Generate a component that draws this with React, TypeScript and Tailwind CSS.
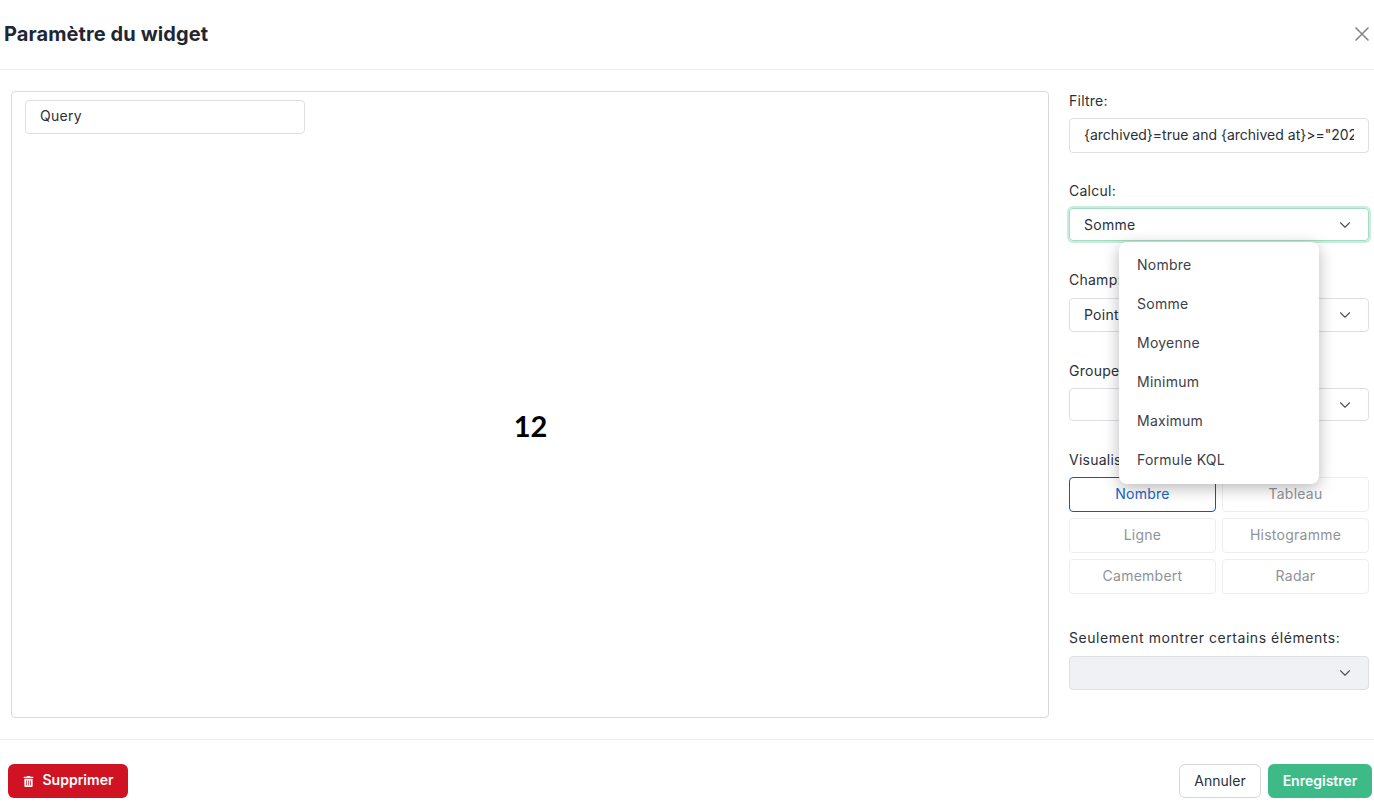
import React from "react";
import { ChevronDown } from "lucide-react";
import { FaTrashAlt } from "react-icons/fa";

const options = ["Nombre", "Somme", "Moyenne", "Minimum", "Maximum", "Formule KQL"];
const charts = ["Tableau", "Ligne", "Histogramme", "Camembert", "Radar"];

const Select = ({ value, className = "" }: { value?: string; className?: string }) => (
  <div
    className={`flex items-center justify-between rounded border pl-[14px] pr-[14px] ${className}`}
  >
    <span className="pb-[1px]">{value}</span>
    <ChevronDown size={18} strokeWidth={1.5} className="text-[#4f5259]" />
  </div>
);

const App: React.FC = () => {
  return (
    <div className="flex h-[803px] w-[1374px] flex-col overflow-hidden bg-white font-['Inter',sans-serif] text-[14px] tracking-[0.25px] text-[#2b2f38]">
      {/* Header */}
      <div className="flex h-[70px] shrink-0 items-center justify-between border-b border-[#eeeef0] pr-[4px] pl-[4px] pb-[3px]">
        <h1 className="pt-[1px] text-[20px] font-bold tracking-[0.1px] text-[#1f2733]">Paramètre du widget</h1>
        <svg className="mt-[2px]" width="16" height="16" viewBox="0 0 16 16" fill="none" stroke="#84868a" strokeWidth="1.6">
          <path d="M1.5 1.5 14.5 14.5M14.5 1.5 1.5 14.5" />
        </svg>
      </div>

      {/* Body */}
      <div className="flex flex-1 gap-5 pt-[21px] pr-[5px] pl-[11px]">
        <div className="flex h-[627px] w-[1038px] flex-col rounded-sm border border-[#d9d9de] pt-2 pl-[13px]">
          <div className="flex h-[34px] w-[280px] items-center rounded border border-[#dfdfe5] pb-[2px] pl-[14px]">
            Query
          </div>
          <div className="flex h-[585px] w-[1011px] items-center justify-center">
            <span className="font-['Lato',sans-serif] text-[29px] font-bold tracking-normal text-black">12</span>
          </div>
        </div>

        <div className="relative w-[300px]">
          <div className="flex h-[20px] items-center pb-[2px]">Filtre:</div>
          <div className="mt-[7px] flex h-[35px] items-center rounded border border-[#dfdfe5] px-[14px] pb-[2px] tracking-normal">
            <div className="overflow-hidden whitespace-nowrap">{'{archived}=true and {archived at}>="2024-01-01"'}</div>
          </div>

          <div className="mt-[28px] flex h-[20px] items-center pb-[2px]">Calcul:</div>
          <Select
            value="Somme"
            className="mt-[7px] h-[33px] border-[#a3dcc3] shadow-[0_0_0_2px_#c9eddd]"
          />

          <div className="mt-[29px] flex h-[21px] items-center pb-[2px]">Champ:</div>
          <Select value="Points" className="mt-[7px] h-[34px] border-[#dfdfe5]" />

          <div className="mt-[28px] flex h-[21px] items-center">Grouper par:</div>
          <Select className="mt-[7px] h-[33px] border-[#dfdfe5]" />

          <div className="mt-[28px] flex h-[21px] items-center">Visualisation:</div>
          <div className="mt-[7px] grid grid-cols-2 gap-[6px]">
            <div className="flex h-[35px] items-center justify-center rounded border border-[#0b5cb5] pb-[2px] text-[#1565c8]">
              Nombre
            </div>
            {charts.map((name) => (
              <div
                key={name}
                className="flex h-[35px] items-center justify-center rounded border border-[#eeeef0] pb-[2px] text-[#8f9297]"
              >
                {name}
              </div>
            ))}
          </div>

          <div className="mt-[34px] flex h-[21px] items-center pb-[2px] tracking-[0.55px]">
            Seulement montrer certains éléments:
          </div>
          <Select className="mt-[7px] h-[34px] border-[#dfdfe5] bg-[#f0f1f5]" />

          {/* Open dropdown */}
          <div className="absolute top-[151px] left-[50px] flex h-[242px] w-[200px] flex-col rounded-lg bg-white py-[3px] pl-[18px] text-[#3d4047] shadow-[0_4px_16px_rgba(0,0,0,0.28)]">
            {options.map((o) => (
              <div key={o} className="flex h-[39px] shrink-0 items-center">
                {o}
              </div>
            ))}
          </div>
        </div>
      </div>

      {/* Footer */}
      <div className="flex h-[64px] shrink-0 items-start justify-between border-t border-[#eeeef0] pt-[24px] pr-[2px] pl-[8px] tracking-normal">
        <button className="flex h-[34px] w-[120px] items-center justify-center gap-[9px] rounded-md bg-[#cf1322] pb-[3px] font-semibold text-white">
          <FaTrashAlt size={11} className="mt-[3px]" />
          Supprimer
        </button>
        <div className="flex gap-[7px]">
          <button className="h-[34px] w-[82px] rounded-md border border-[#d5d6dc] pb-[2px] text-[#2b2f38]">Annuler</button>
          <button className="h-[34px] w-[104px] rounded-md bg-[#3dba87] pb-[2px] font-semibold text-white">Enregistrer</button>
        </div>
      </div>
    </div>
  );
};

export default App;
